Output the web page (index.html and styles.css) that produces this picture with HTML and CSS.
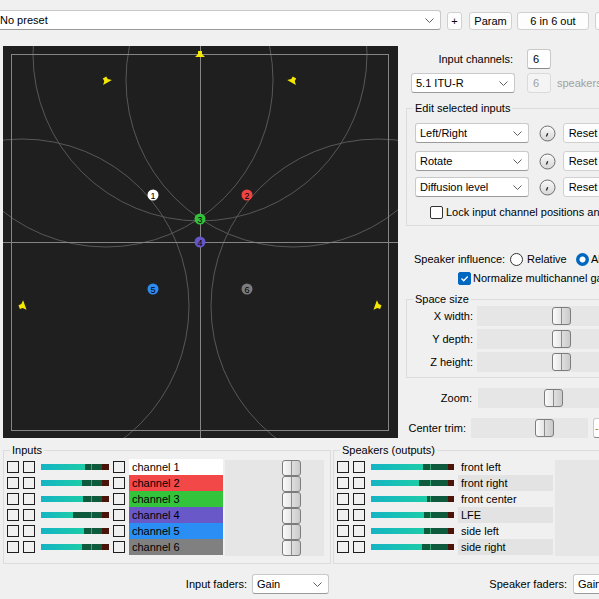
FILE: index.html
```html
<!DOCTYPE html>
<html lang="en">
<head>
    <meta charset="UTF-8">
    <title>Panner</title>
    <link rel="stylesheet" href="styles.css">
</head>
<body>
<div class="app">
    <div class="topbar">
        <div class="combo preset"><span>No preset</span><svg class="chev" width="9" height="5" viewBox="0 0 9 5"><path d="M.5 .5l4 4 4-4"/></svg></div>
        <button class="btn plus">+</button>
        <button class="btn param">Param</button>
        <button class="btn io">6 in 6 out</button>
        <button class="btn more"></button>
    </div>

    <div class="main">
        <svg class="field" width="395" height="392" viewBox="0 0 395 392">
            <g fill="none" stroke="#585858">
                <circle cx="197" cy="8" r="167"/>
                <circle cx="103" cy="34" r="167"/>
                <circle cx="290" cy="34" r="167"/>
                <circle cx="19" cy="260" r="167"/>
                <circle cx="375" cy="260" r="167"/>
            </g>
            <g fill="none" stroke="#858585">
                <rect x="8.5" y="8.5" width="377" height="376"/>
                <line x1="197.5" y1="0" x2="197.5" y2="392"/>
                <line x1="0" y1="196.5" x2="395" y2="196.5"/>
            </g>
            <g fill="#f5e800">
                <path transform="translate(197 8)" d="M-2 -3h4v3l3 3h-10l3-3z"/>
                <path transform="translate(103 34) rotate(-30)" d="M-2 -3h4v3l3 3h-10l3-3z"/>
                <path transform="translate(290 34) rotate(30)" d="M-2 -3h4v3l3 3h-10l3-3z"/>
                <path transform="translate(19 260) rotate(-110)" d="M-2 -3h4v3l3 3h-10l3-3z"/>
                <path transform="translate(375 260) rotate(110)" d="M-2 -3h4v3l3 3h-10l3-3z"/>
            </g>
            <g class="dots">
                <circle cx="150" cy="149" r="5.5" fill="#ffffff"/>
                <circle cx="244" cy="149" r="5.5" fill="#f04444"/>
                <circle cx="197" cy="173" r="5.5" fill="#34c23a"/>
                <circle cx="197" cy="196" r="5.5" fill="#6456c8"/>
                <circle cx="150" cy="243" r="5.5" fill="#2b8cf2"/>
                <circle cx="244" cy="243" r="5.5" fill="#7c7c7c"/>
                <text x="150" y="152.5">1</text>
                <text x="244" y="152.5">2</text>
                <text x="197" y="176.5">3</text>
                <text x="197" y="199.5">4</text>
                <text x="150" y="246.5">5</text>
                <text x="244" y="246.5">6</text>
            </g>
        </svg>

        <div class="side">
            <div class="row r-channels">
                <span class="lbl">Input channels:</span>
                <div class="num">6</div>
            </div>
            <div class="row r-layout">
                <div class="combo"><span>5.1 ITU-R</span><svg class="chev" width="9" height="5" viewBox="0 0 9 5"><path d="M.5 .5l4 4 4-4"/></svg></div>
                <div class="num off">6</div>
                <span class="muted">speakers</span>
            </div>

            <fieldset class="group edit">
                <legend>Edit selected inputs</legend>
                <div class="row">
                    <div class="combo"><span>Left/Right</span><svg class="chev" width="9" height="5" viewBox="0 0 9 5"><path d="M.5 .5l4 4 4-4"/></svg></div>
                    <svg class="knob" width="17" height="17" viewBox="0 0 17 17">
                        <defs>
                            <linearGradient id="knobfill" x1="0" y1="0" x2="0" y2="1">
                                <stop offset="0" stop-color="#fafafa"/>
                                <stop offset="1" stop-color="#d6d6d6"/>
                            </linearGradient>
                        </defs>
                        <circle cx="8.5" cy="8.5" r="7.5"/><path d="M7.4 11.4l1.3-3.2"/>
                    </svg>
                    <button class="btn reset">Reset</button>
                </div>
                <div class="row second">
                    <div class="combo"><span>Rotate</span><svg class="chev" width="9" height="5" viewBox="0 0 9 5"><path d="M.5 .5l4 4 4-4"/></svg></div>
                    <svg class="knob" width="17" height="17" viewBox="0 0 17 17"><circle cx="8.5" cy="8.5" r="7.5"/><path d="M7.4 11.4l1.3-3.2"/></svg>
                    <button class="btn reset">Reset</button>
                </div>
                <div class="row third">
                    <div class="combo"><span>Diffusion level</span><svg class="chev" width="9" height="5" viewBox="0 0 9 5"><path d="M.5 .5l4 4 4-4"/></svg></div>
                    <svg class="knob" width="17" height="17" viewBox="0 0 17 17"><circle cx="8.5" cy="8.5" r="7.5"/><path d="M7.4 11.4l1.3-3.2"/></svg>
                    <button class="btn reset">Reset</button>
                </div>
                <div class="row lock">
                    <span class="box"></span>
                    <span>Lock input channel positions and levels</span>
                </div>
            </fieldset>

            <div class="row influence">
                <span class="lbl">Speaker influence:</span>
                <span class="radio"></span>
                <span class="opt">Relative</span>
                <span class="radio on"></span>
                <span class="opt">Absolute</span>
            </div>
            <div class="row norm">
                <span class="box on"><svg width="11" height="11" viewBox="0 0 11 11"><path d="M2.5 5.5l2.2 2.2 4-4.2"/></svg></span>
                <span>Normalize multichannel gain</span>
            </div>

            <fieldset class="group space">
                <legend>Space size</legend>
                <div class="row slider">
                    <span class="lbl">X width:</span>
                    <div class="track"><span class="thumb"></span></div>
                </div>
                <div class="row slider">
                    <span class="lbl">Y depth:</span>
                    <div class="track"><span class="thumb"></span></div>
                </div>
                <div class="row slider">
                    <span class="lbl">Z height:</span>
                    <div class="track"><span class="thumb"></span></div>
                </div>
            </fieldset>

            <div class="row zoom">
                <span class="lbl">Zoom:</span>
                <div class="track"><span class="thumb"></span></div>
            </div>
            <div class="row trim">
                <span class="lbl">Center trim:</span>
                <div class="track"><span class="thumb"></span></div>
                <div class="num val">-</div>
            </div>
        </div>
    </div>

    <div class="mixer">
        <fieldset class="group inputs">
            <legend>Inputs</legend>
            <div class="strip">
                <div class="rows">
                    <div class="chan"><span class="sq"></span><span class="sq"></span><div class="meter"><div class="lvl" style="width:44px"></div></div><span class="sq"></span><span class="name c1">channel 1</span></div>
                    <div class="chan"><span class="sq"></span><span class="sq"></span><div class="meter"><div class="lvl" style="width:41px"></div></div><span class="sq"></span><span class="name c2">channel 2</span></div>
                    <div class="chan"><span class="sq"></span><span class="sq"></span><div class="meter"><div class="lvl" style="width:42px"></div></div><span class="sq"></span><span class="name c3">channel 3</span></div>
                    <div class="chan"><span class="sq"></span><span class="sq"></span><div class="meter"><div class="lvl" style="width:32px"></div></div><span class="sq"></span><span class="name c4">channel 4</span></div>
                    <div class="chan"><span class="sq"></span><span class="sq"></span><div class="meter"><div class="lvl" style="width:43px"></div></div><span class="sq"></span><span class="name c5">channel 5</span></div>
                    <div class="chan"><span class="sq"></span><span class="sq"></span><div class="meter"><div class="lvl" style="width:41px"></div></div><span class="sq"></span><span class="name c6">channel 6</span></div>
                </div>
                <div class="faders">
                    <span class="thumb"></span>
                    <span class="thumb"></span>
                    <span class="thumb"></span>
                    <span class="thumb"></span>
                    <span class="thumb"></span>
                    <span class="thumb"></span>
                </div>
            </div>
        </fieldset>

        <fieldset class="group speakers">
            <legend>Speakers (outputs)</legend>
            <div class="strip">
                <div class="rows">
                    <div class="chan"><span class="sq"></span><span class="sq"></span><div class="meter wide"><div class="lvl" style="width:52px"></div></div><span class="name">front left</span></div>
                    <div class="chan"><span class="sq"></span><span class="sq"></span><div class="meter wide"><div class="lvl" style="width:48px"></div></div><span class="name alt">front right</span></div>
                    <div class="chan"><span class="sq"></span><span class="sq"></span><div class="meter wide"><div class="lvl" style="width:56px"></div></div><span class="name">front center</span></div>
                    <div class="chan"><span class="sq"></span><span class="sq"></span><div class="meter wide"><div class="lvl" style="width:53px"></div></div><span class="name alt">LFE</span></div>
                    <div class="chan"><span class="sq"></span><span class="sq"></span><div class="meter wide"><div class="lvl" style="width:53px"></div></div><span class="name">side left</span></div>
                    <div class="chan"><span class="sq"></span><span class="sq"></span><div class="meter wide"><div class="lvl" style="width:51px"></div></div><span class="name alt">side right</span></div>
                </div>
                <div class="spanel"></div>
            </div>
        </fieldset>
    </div>

    <div class="footer">
        <div class="fgroup first">
            <span>Input faders:</span>
            <div class="combo"><span>Gain</span><svg class="chev" width="9" height="5" viewBox="0 0 9 5"><path d="M.5 .5l4 4 4-4"/></svg></div>
        </div>
        <div class="fgroup second">
            <span>Speaker faders:</span>
            <div class="combo"><span>Gain</span><svg class="chev" width="9" height="5" viewBox="0 0 9 5"><path d="M.5 .5l4 4 4-4"/></svg></div>
        </div>
    </div>
</div>
</body>
</html>
```

FILE: styles.css
```css
*{
    box-sizing: border-box;
}
body{
    margin: 0;
    background: #f0f0f0;
    font-family: "Liberation Sans", Arial, sans-serif;
    font-size: 11px;
    color: #000;
}
.app{
    width: 599px;
    height: 599px;
    overflow: hidden;
}
.row{
    display: flex;
    align-items: center;
}
.row > *{
    flex-shrink: 0;
}

/* common controls */
.combo{
    display: flex;
    align-items: center;
    justify-content: space-between;
    flex-shrink: 0;
    height: 20px;
    padding: 0 6px 0 4px;
    background: #fff;
    border: 1px solid #c9c9c9;
    border-bottom-color: #9a9a9a;
    border-radius: 3px;
}
.chev path{
    fill: none;
    stroke: #606060;
}
.btn{
    flex-shrink: 0;
    height: 18px;
    padding: 0;
    font: inherit;
    color: #000;
    background: #fdfdfd;
    border: 1px solid #d0d0d0;
    border-radius: 3px;
}
.num{
    width: 24px;
    height: 20px;
    padding: 0 5px;
    line-height: 18px;
    background: #fff;
    border: 1px solid #c9c9c9;
    border-bottom-color: #8a8a8a;
    border-radius: 3px;
}
.num.off{
    color: #a0a0a0;
    background: #f4f4f4;
    border-color: #dadada;
}
.box{
    width: 13px;
    height: 13px;
    background: #fff;
    border: 1px solid #333;
    border-radius: 2px;
}
.box.on{
    background: #0067c0;
    border-color: #0067c0;
}
.box svg{
    display: block;
}
.box path{
    fill: none;
    stroke: #fff;
    stroke-width: 1.3;
}
.radio{
    width: 13px;
    height: 13px;
    background: #fff;
    border: 1px solid #333;
    border-radius: 50%;
}
.radio.on{
    border: none;
    background: radial-gradient(circle, #fff 0, #fff 2.6px, #0067c0 3.4px);
}
.group{
    margin: 0;
    border: 1px solid #dcdcdc;
    border-radius: 0;
}
.group legend{
    padding: 0 2px;
    line-height: 13px;
}
.track{
    display: flex;
    align-items: center;
    height: 20px;
    background: #e6e6e6;
}
.thumb{
    display: block;
    width: 19px;
    height: 18px;
    border: 1px solid #7c7c7c;
    border-radius: 3px;
    background: linear-gradient(to right, #fbfbfb 0, #e6e6e6 8px, #8c8c8c 8px, #8c8c8c 9px, #dedede 9px, #cacaca 17px);
}

/* top bar */
.topbar{
    display: flex;
    align-items: center;
    height: 40px;
}
.topbar > *{
    flex-shrink: 0;
}
.preset{
    width: 446px;
    margin-left: -5px;
    padding-left: 4px;
}
.topbar .btn{
    margin-top: 2px;
}
.plus{
    width: 15px;
    margin-left: 6px;
}
.param{
    width: 43px;
    margin-left: 7px;
}
.io{
    width: 72px;
    margin-left: 5px;
}
.more{
    width: 40px;
    margin-left: 6px;
}

/* main area */
.main{
    display: flex;
    height: 398px;
}
.field{
    display: block;
    flex-shrink: 0;
    margin: 6px 0 0 3px;
    background: #1f1f1f;
}
.dots text{
    font-size: 9px;
    text-anchor: middle;
    fill: #000;
}
.side{
    flex-shrink: 0;
    width: 193px;
    margin-left: 8px;
}
.r-channels{
    height: 20px;
    margin-top: 9px;
}
.r-channels .lbl{
    width: 107px;
    text-align: right;
}
.r-channels .num{
    margin-left: 14px;
}
.r-layout{
    height: 20px;
    margin-top: 4px;
}
.r-layout .combo{
    width: 104px;
    margin-left: 5px;
}
.r-layout .num{
    margin-left: 12px;
}
.muted{
    margin-left: 6px;
    color: #a0a0a0;
}

.edit{
    width: 230px;
    margin-top: 9px;
    padding: 8px 0 6px 8px;
}
.edit legend{
    margin-left: -2px;
}
.edit .row{
    height: 20px;
}
.edit .second{
    margin-top: 8px;
}
.edit .third{
    margin-top: 6px;
}
.edit .combo{
    width: 114px;
}
.knob{
    display: block;
    width: 17px;
    height: 17px;
    margin-left: 10px;
}
.knob circle{
    fill: url(#knobfill);
    stroke: #6e6e6e;
}
.knob path{
    fill: none;
    stroke: #222;
    stroke-width: 1.3;
}
.reset{
    width: 40px;
    height: 20px;
    margin-left: 7px;
}
.edit .lock{
    height: 14px;
    margin: 8px 0 0 15px;
}
.lock .box{
    margin-right: 3px;
}

.influence{
    height: 20px;
    margin-top: 23px;
    padding-left: 8px;
}
.influence .lbl{
    width: 92px;
}
.influence .radio{
    margin-left: 4px;
}
.influence .opt{
    width: 45px;
    margin-left: 4px;
}
.influence .opt:last-child{
    margin-left: 2px;
}
.norm{
    height: 14px;
    margin-top: 2px;
    padding-left: 52px;
}
.norm .box{
    margin-right: 2px;
}

.space{
    width: 230px;
    margin-top: 8px;
    padding: 0 0 5px 0;
}
.space legend{
    margin-left: 6px;
}
.slider + .slider{
    margin-top: 3px;
}
.slider .lbl{
    width: 66px;
    text-align: right;
}
.slider .track{
    width: 140px;
    margin-left: 4px;
    padding-left: 75px;
}
.zoom{
    margin-top: 10px;
}
.zoom .lbl{
    width: 66px;
    text-align: right;
}
.zoom .track{
    width: 140px;
    margin-left: 6px;
    padding-left: 66px;
}
.trim{
    margin-top: 10px;
}
.trim .lbl{
    width: 60px;
    text-align: right;
}
.trim .track{
    width: 117px;
    margin-left: 5px;
    padding-left: 64px;
}
.trim .val{
    width: 30px;
    margin-left: 5px;
    padding: 0 1px;
    color: #c07a00;
}

/* mixer */
.mixer{
    display: flex;
    margin-top: 6px;
}
.mixer .group{
    flex-shrink: 0;
    padding: 2px 0 7px 3px;
}
.mixer legend{
    margin-left: 3px;
}
.inputs{
    width: 328px;
    margin-left: 3px;
}
.speakers{
    width: 300px;
    margin-left: 2px;
}
.strip{
    display: flex;
}
.chan{
    display: flex;
    align-items: center;
    height: 16px;
}
.sq{
    flex-shrink: 0;
    width: 12px;
    height: 12px;
    border: 1px solid #1e1e1e;
}
.sq + .sq{
    margin-left: 4px;
}
.meter{
    flex-shrink: 0;
    width: 68px;
    height: 6px;
    margin: 0 4px 0 6px;
    background: linear-gradient(to right, #0d5a3c 0, #0d5a3c 50px, #3caa78 50px, #3caa78 51px, #0d5a3c 51px, #0d5a3c 61px, #4a1408 61px);
}
.meter.wide{
    width: 83px;
    background: linear-gradient(to right, #0d5a3c 0, #0d5a3c 59px, #3caa78 59px, #3caa78 60px, #0d5a3c 60px, #0d5a3c 77px, #4a1408 77px);
}
.lvl{
    height: 6px;
    background: linear-gradient(to right, #15b4c4, #1ccca8);
}
.name{
    flex-shrink: 0;
    height: 16px;
    padding-left: 3px;
    line-height: 16px;
}
.inputs .name{
    width: 94px;
    margin-left: 4px;
}
.c1{ background: #ffffff; }
.c2{ background: #f24848; }
.c3{ background: #34c43c; }
.c4{ background: #6858c8; }
.c5{ background: #2a8ef4; }
.c6{ background: #808080; }
.speakers .name{
    width: 95px;
}
.name.alt{
    background: #e3e3e3;
}
.faders{
    flex-shrink: 0;
    width: 99px;
    height: 96px;
    margin: 1px 0 0 2px;
    padding-left: 57px;
    background: #e6e6e6;
}
.faders .thumb{
    height: 16px;
}
.spanel{
    flex-shrink: 0;
    width: 60px;
    height: 96px;
    margin: 1px 0 0 2px;
    background: #e6e6e6;
}

/* footer */
.footer{
    display: flex;
    align-items: center;
    height: 36px;
    padding-top: 4px;
}
.fgroup{
    display: flex;
    align-items: center;
    justify-content: flex-end;
    flex-shrink: 0;
}
.fgroup.first{
    width: 329px;
}
.fgroup.first .combo{
    width: 77px;
    margin-left: 5px;
}
.fgroup.second{
    width: 238px;
}
.fgroup.second .combo{
    width: 80px;
    margin-left: 6px;
    margin-right: -86px;
}
```
